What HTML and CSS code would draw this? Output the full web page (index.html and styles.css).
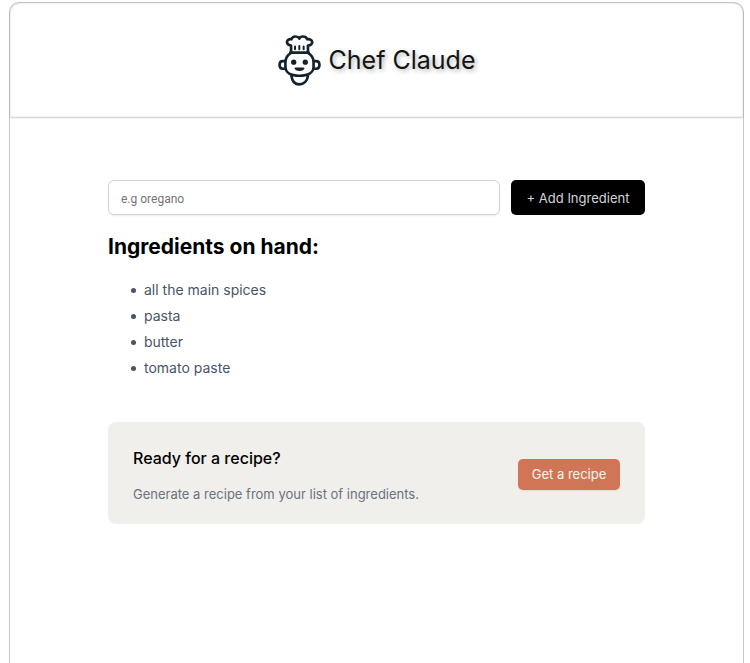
FILE: index.html
```
<!DOCTYPE html>
<html lang="en">
<head>
<meta charset="utf-8">
<title>Chef Claude</title>
<link rel="stylesheet" href="styles.css">
</head>
<body>
<div class="app">
  <header class="header">
    <svg class="logo" viewBox="27 29 129 154" fill="none" stroke="#14222b" stroke-width="8" stroke-linejoin="round" stroke-linecap="round" aria-hidden="true">
      <path d="M66 82V61C49 59 50 39 67 42C71 31 86 31 91 40C94 31 111 31 115 42C133 39 136 59 117 61V82"/>
      <path d="M64 82H119"/>
      <path d="M78 64V72M91 62V72M104 64V72" stroke-width="6"/>
      <path d="M65 84C53 91 49 100 49 112V126C49 143 66 152 91 152S134 143 134 126V112C134 100 130 91 118 84"/>
      <path d="M48 108H41C28 108 28 131 41 131H49M135 108H142C155 108 155 131 142 131H134"/>
      <path d="M67 152C69 168 78 178 91 178S115 168 117 152"/>
      <circle cx="74" cy="111" r="8" fill="#14222b" stroke="none"/>
      <circle cx="109" cy="111" r="8" fill="#14222b" stroke="none"/>
      <path d="M79 130C84 137 99 137 104 130Z" fill="#14222b" stroke-width="5"/>
    </svg>
    <h1 class="title">Chef Claude</h1>
  </header>
  <main class="main">
    <form class="add-form">
      <input class="field" type="text" placeholder="e.g oregano" aria-label="Add ingredient">
      <button class="add-button" type="button">+ Add Ingredient</button>
    </form>
    <section>
      <h2 class="list-title">Ingredients on hand:</h2>
      <ul class="ingredients">
        <li>all the main spices</li>
        <li>pasta</li>
        <li>butter</li>
        <li>tomato paste</li>
      </ul>
    </section>
    <section class="recipe-card">
      <div>
        <h3 class="recipe-title">Ready for a recipe?</h3>
        <p class="recipe-text">Generate a recipe from your list of ingredients.</p>
      </div>
      <button class="recipe-button" type="button">Get a recipe</button>
    </section>
  </main>
</div>
</body>
</html>
```
FILE: styles.css
```
* {
  box-sizing: border-box;
}

body {
  margin: 0;
  padding: 2px 6px 0 9px;
  font-family: Inter, "Liberation Sans", sans-serif;
  background: #fff;
}

h1, h2, h3, p, ul {
  margin: 0;
}

.app {
  min-height: calc(100vh - 2px);
  border: 1px solid #c6c6c6;
  border-bottom: 0;
  border-radius: 10px 10px 0 0;
}

.header {
  display: flex;
  align-items: center;
  justify-content: center;
  gap: 8px;
  height: 114px;
  border-radius: 10px 10px 0 0;
  box-shadow: 0 1px 2px rgba(0, 0, 0, 0.2), inset 0 0 2px rgba(0, 0, 0, 0.2);
}

.logo {
  width: 43px;
  height: 51px;
}

.title {
  font-size: 25px;
  line-height: 32px;
  font-weight: 400;
  color: #141413;
  text-shadow: 2px 2px 4px rgba(0, 0, 0, 0.3);
}

.main {
  padding: 63px 98px 0;
}

.add-form {
  display: flex;
  gap: 11px;
}

.field {
  flex: 1;
  min-width: 0;
  height: 35px;
  padding: 2px 12px 0;
  border: 1px solid #d1d5db;
  border-radius: 6px;
  font: 12px Roboto, sans-serif;
  box-shadow: 0 1px 2px rgba(0, 0, 0, 0.08);
}

.field::placeholder {
  color: #757575;
}

.add-button {
  width: 134px;
  height: 35px;
  padding: 0;
  border: 0;
  border-radius: 5px;
  background: #000;
  color: #d1d5db;
  font: 13px Inter, sans-serif;
}

.list-title {
  margin-top: 18px;
  font-size: 21px;
  line-height: 28px;
  font-weight: 700;
  color: #000;
}

.ingredients {
  margin-top: 16px;
  padding-left: 23px;
  list-style: none;
  font-size: 14px;
  line-height: 26px;
  color: #475569;
}

.ingredients li {
  display: flex;
  align-items: center;
  gap: 8px;
}

.ingredients li::before {
  content: "";
  width: 5px;
  height: 5px;
  border-radius: 50%;
  background: currentColor;
}

.recipe-card {
  display: flex;
  align-items: center;
  justify-content: space-between;
  margin-top: 41px;
  padding: 24px 25px 22px;
  border-radius: 8px;
  background: #f0efeb;
}

.recipe-title {
  font-size: 16px;
  line-height: 24px;
  font-weight: 500;
  color: #000;
}

.recipe-text {
  margin-top: 16px;
  font-size: 13px;
  line-height: 16px;
  color: #6b7280;
}

.recipe-button {
  width: 102px;
  height: 31px;
  padding: 0;
  border: 0;
  border-radius: 5px;
  background: #d17557;
  color: #faf5f0;
  font: 13px Inter, sans-serif;
  box-shadow: 0 1px 2px rgba(0, 0, 0, 0.08);
}
```
